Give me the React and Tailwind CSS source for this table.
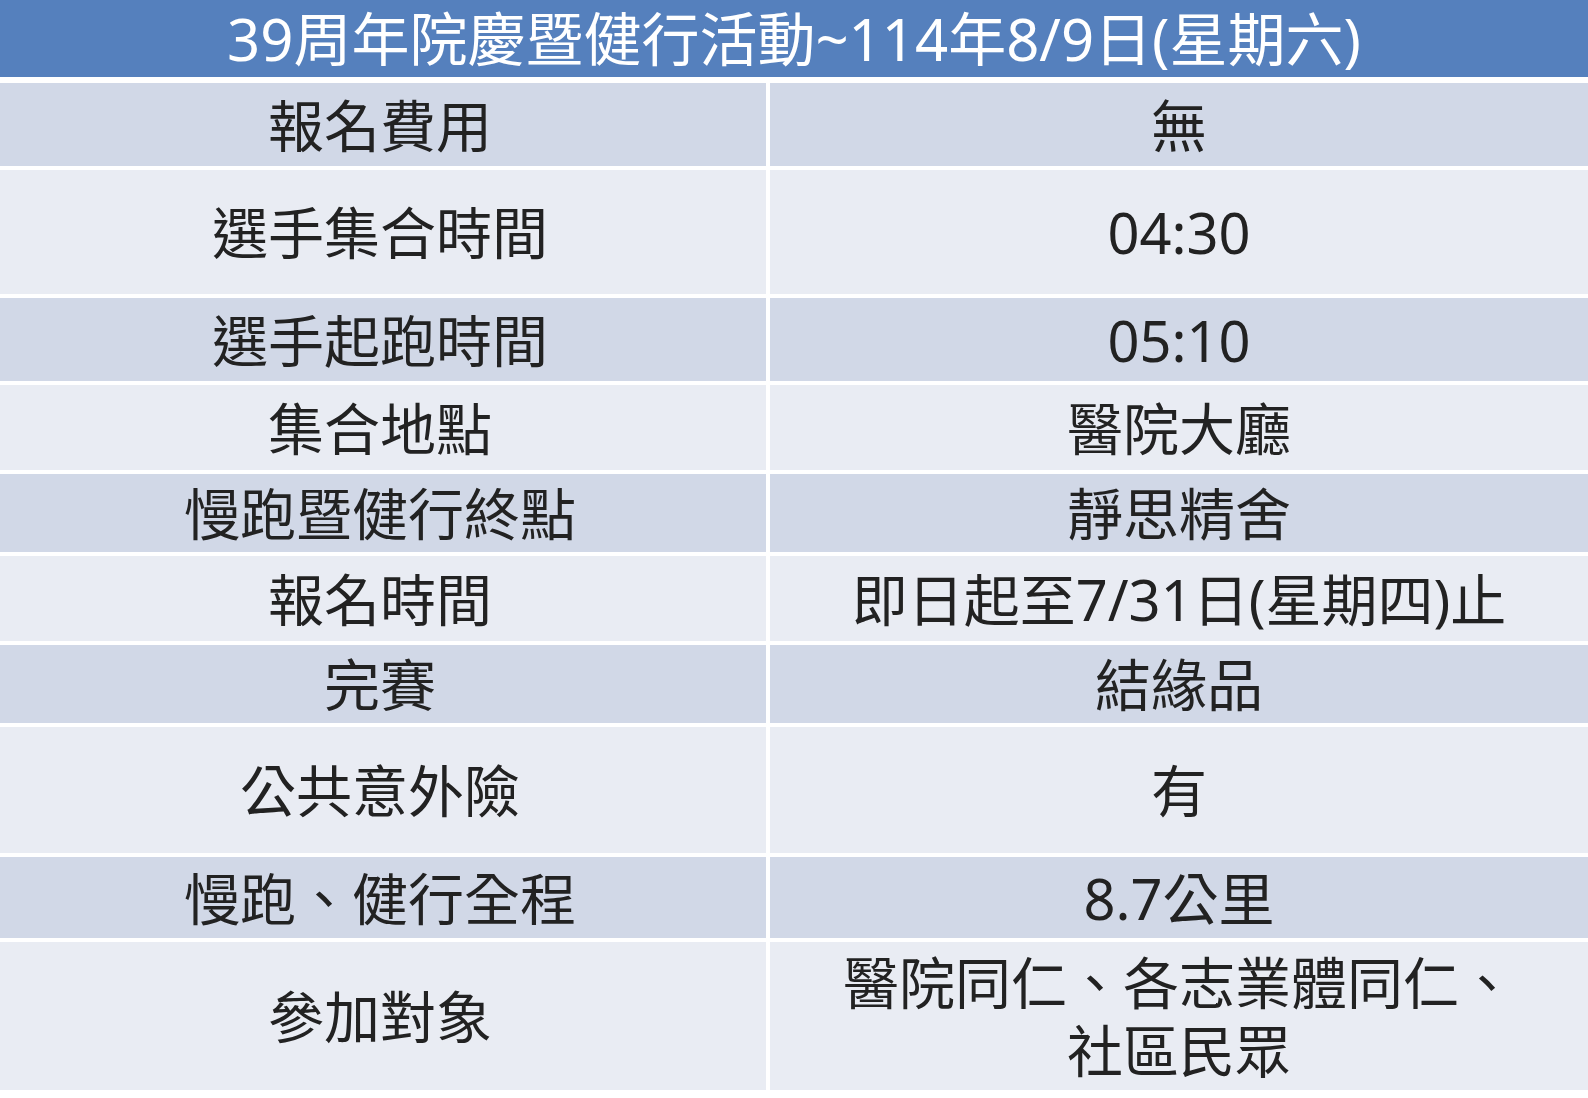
import React from "react";

const rows = [
  { h: "h-[83px]", dark: true, l: "報名費用", r: "無" },
  { h: "h-[124px]", dark: false, l: "選手集合時間", r: "04:30" },
  { h: "h-[83px]", dark: true, l: "選手起跑時間", r: "05:10" },
  { h: "h-[85px]", dark: false, l: "集合地點", r: "醫院大廳" },
  { h: "h-[78px]", dark: true, l: "慢跑暨健行終點", r: "靜思精舍" },
  { h: "h-[85px]", dark: false, l: "報名時間", r: "即日起至7/31日(星期四)止" },
  { h: "h-[78px]", dark: true, l: "完賽", r: "結緣品" },
  { h: "h-[126px]", dark: false, l: "公共意外險", r: "有" },
  { h: "h-[81px]", dark: true, l: "慢跑、健行全程", r: "8.7公里" },
  { h: "h-[148px]", dark: false, l: "參加對象", r: ["醫院同仁、各志業體同仁、", "社區民眾"] },
];

export default function App() {
  return (
    <div
      className="w-[1588px] h-[1098px] bg-white overflow-hidden flex flex-col"
      style={{ fontFamily: '"Noto Sans", "Noto Sans CJK TC", sans-serif' }}
    >
      <div className="h-[77px] bg-[#5580bd] flex items-center justify-center text-white text-[58px] leading-none">
        39周年院慶暨健行活動~114年8/9日(星期六)
      </div>
      <div className="flex flex-col gap-[4px] mt-[6px]">
        {rows.map((row, i) => (
          <div key={i} className={`flex gap-[4px] ${row.h}`}>
            <div
              className={`w-[766px] flex items-center justify-center text-[56px] leading-none text-[#222222] pr-[6px] ${
                row.dark ? "bg-[#d1d8e7]" : "bg-[#e9ecf3]"
              }`}
            >
              {row.l}
            </div>
            <div
              className={`flex-1 flex flex-col items-center justify-center text-[56px] leading-[68px] text-[#222222] ${
                row.dark ? "bg-[#d1d8e7]" : "bg-[#e9ecf3]"
              }`}
            >
              {Array.isArray(row.r) ? row.r.map((t, j) => <div key={j}>{t}</div>) : row.r}
            </div>
          </div>
        ))}
      </div>
    </div>
  );
}
